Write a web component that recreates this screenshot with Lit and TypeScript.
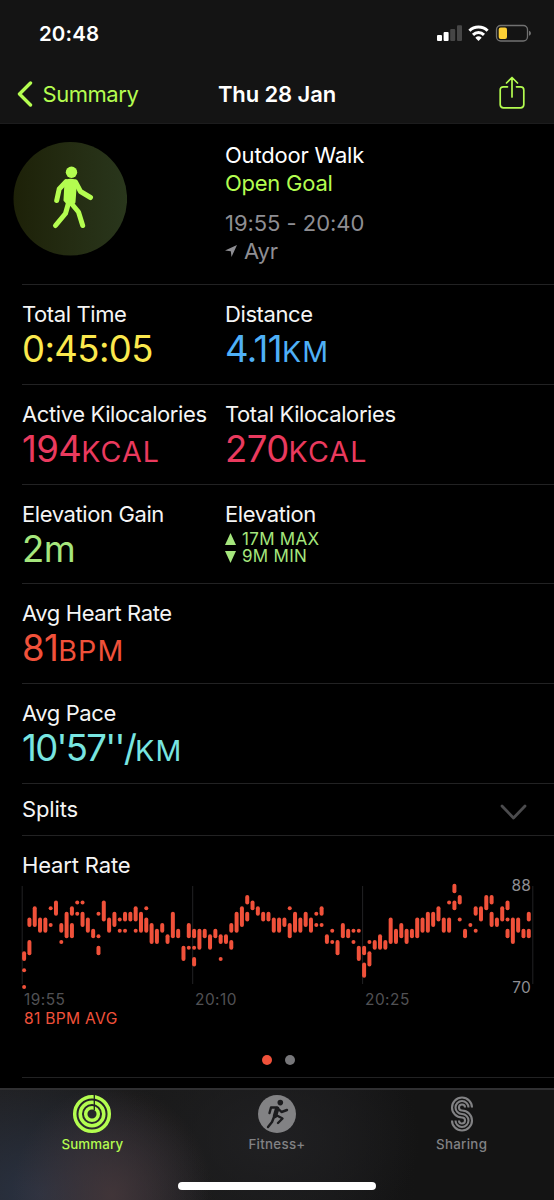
import { LitElement, html, svg, css } from "lit";
import { customElement, property } from "lit/decorators.js";
import { styleMap } from "lit/directives/style-map.js";

/** One entry per time slot; "high-low" is a range, a single number is one reading. */
const SAMPLES = `76-75 73 70|82-81 78-76|84-81|82-80|82-80|84 81|85-83|81-80 78|83-79|84-83 81-79|85 83|85 83-81|82-80|80-79|83 79 77-76|85-82
82-80|83-81|82 80|83-82 80|83-82|84-82 80|83-80|84 82-80|81-78|80-78|81-80|79-78|83-79|80-79|77-75|81-79 77
80-79 77 75-74|80-77|80-79|79-77|80-79|79-78 75|79-78|81-80 78-77|83-80|84-81|86-85 83-82|85-84|84-83|83-82|83-82|82-80
82-80|82-81|84 81-79|83-80|82-80|83-81|82-80|83 81|84-83 81|79-78|80 78|78-76|81-79|80-79|80 78|80 77-75
77-76 74-72|78 76-74|78-77|79-77|78-77|82-78|80-78|81-79|80-78|80-79|82-79|82-80|83-80|83-81|84-82|82-80
85 82-80|88-87 85-84|86-85 82|80-79|81|84-83 80|84-82|86-84|86-85 83-81|82-81|84-82|85-84 82 80-79|82-78|82-80|80-79|83-82 80-79`;

@customElement("heart-rate-chart")
export class HeartRateChart extends LitElement {
  static styles = css`
    :host { display: block; }
    svg { display: block; overflow: visible; }
    .grid { stroke: #222224; stroke-width: 1; }
    .range { stroke: #f0513a; stroke-width: 4; stroke-linecap: round; }
    .dot { fill: #f0513a; }
    .axis { fill: #8e8e93; font: 15.5px Inter, sans-serif; text-anchor: end; letter-spacing: 0.2px; }
    .time { fill: #515154; font: 15.4px Inter, sans-serif; letter-spacing: 0.5px; }
    .avg { fill: #f0513a; font: 15.6px Inter, sans-serif; letter-spacing: 0.3px; }
  `;

  render() {
    const y = (bpm: number) => 6.7 + (88 - bpm) * 5.63;
    const slots = SAMPLES.split(/[|\n]/);
    return html`<svg width="532" height="152" viewBox="0 0 532 152">
      ${[0.2, 170.7, 340.6, 510.8].map((x) => svg`<line class="grid" x1=${x} x2=${x} y1="7" y2="105"></line>`)}
      ${slots.map((slot, i) => {
        const x = 2.1 + i * 5.3125;
        return slot.split(" ").map((part) => {
          const [hi, lo] = part.split("-").map(Number);
          return lo
            ? svg`<line class="range" x1=${x} x2=${x} y1=${y(hi)} y2=${y(lo)}></line>`
            : svg`<circle class="dot" cx=${x} cy=${y(hi)} r="2"></circle>`;
        });
      })}
      <text class="axis" x="509" y="12">88</text>
      <text class="axis" x="509" y="114">70</text>
      <text class="time" x="2" y="126">19:55</text>
      <text class="time" x="173" y="126">20:10</text>
      <text class="time" x="343" y="126">20:25</text>
      <text class="avg" x="2" y="145">81 BPM AVG</text>
    </svg>`;
  }
}

@customElement("metric-cell")
export class MetricCell extends LitElement {
  @property() label = "";
  @property() value = "";
  @property() unit = "";
  @property() color = "#fff";
  @property({ type: Boolean }) tight = false;

  static styles = css`
    :host { display: block; }
    .label { font-size: 22px; line-height: 28px; letter-spacing: -0.4px; color: #f5f5f5; white-space: nowrap; }
    .value { display: flex; align-items: baseline; font-size: 36.5px; line-height: 43px; font-weight: 380; letter-spacing: -0.6px; white-space: nowrap; }
    :host([tight]) .value { letter-spacing: -1.7px; }
    .value .unit { font-size: 28.6px; font-weight: 430; letter-spacing: 1.1px; }
  `;

  render() {
    return html`<div class="label">${this.label}</div>
      <div class="value" style=${styleMap({ color: this.color })}>${this.value}<span class="unit">${this.unit}</span></div>`;
  }
}

@customElement("app-root")
export class AppRoot extends LitElement {
  static styles = css`
    :host { display: flex; flex-direction: column; width: 554px; height: 1200px; overflow: hidden; background: #000; color: #fff; font-family: Inter, sans-serif; }
    * { box-sizing: border-box; }
    svg { display: block; flex: none; }
    .top { height: 124px; flex: none; background: #141414; border-bottom: 1px solid #1c1c1d; }
    .status { height: 65px; display: flex; align-items: center; justify-content: space-between; padding: 1px 22px 0 39px; }
    .clock { font-size: 20.5px; font-weight: 600; letter-spacing: 0.1px; }
    .nav { height: 57px; display: grid; grid-template-columns: 1fr auto 1fr; align-items: center; padding: 0 17px; }
    .back { display: flex; align-items: center; gap: 9.5px; color: #b4fd50; font-size: 22px; letter-spacing: -0.45px; }
    .title { font-size: 22px; font-weight: 600; letter-spacing: -0.1px; }
    .share { justify-self: end; margin: 0 12px 2px 0; }
    .hero { height: 160px; flex: none; display: grid; grid-template-columns: 212px 1fr; padding: 18px 0 0 13px; }
    .info { font-size: 22px; line-height: 27.5px; letter-spacing: -0.2px; }
    .goal { color: #b4fd50; letter-spacing: -0.25px; }
    .when { margin-top: 13px; color: #8e8e93; letter-spacing: -0.05px; }
    .place { display: flex; align-items: center; gap: 7px; color: #8e8e93; }
    .row { margin-left: 22px; flex: none; border-top: 1px solid #222223; }
    .metrics { height: 99.8px; display: grid; grid-template-columns: 203px 1fr; padding-top: 15px; }
    .label { font-size: 22px; line-height: 28px; letter-spacing: -0.15px; color: #f5f5f5; }
    .narrow { letter-spacing: -0.38px; }
    .elev { display: flex; align-items: center; gap: 6px; font-size: 17px; line-height: 17.5px; color: #a5e67d; letter-spacing: 0.3px; }
    .up { margin-top: 3px; }
    .splits { height: 52px; display: flex; align-items: center; justify-content: space-between; padding-right: 27px; }
    .chevron { margin-top: 3px; }
    .heart { height: 242px; padding-top: 15px; }
    .pages { display: flex; gap: 13.5px; padding: 24px 0 0 239.5px; }
    .page { width: 10px; height: 10px; border-radius: 50%; background: #77777a; }
    .current { background: #f0513a; }
    .end { flex: 1; }
    .tabs { position: relative; height: 112px; flex: none; border-top: 2px solid #303032;
      background:
        radial-gradient(ellipse 100px 110px at 112px 105px, #48383acc, #48383a00),
        radial-gradient(ellipse 170px 120px at 40px 105px, #2a3242, #2a324200),
        radial-gradient(ellipse 150px 110px at 270px 50px, #202022, #20202200),
        linear-gradient(90deg, #202022, #191919 30%, #171718 60%, #141414 75%); }
    .items { display: grid; grid-template-columns: repeat(3, 184.67px); padding-top: 4px; }
    .tab { display: flex; flex-direction: column; align-items: center; gap: 1px; color: #828284; font-size: 13.3px; font-weight: 500; line-height: 18px; letter-spacing: 0.3px; }
    .active { color: #b4fd50; letter-spacing: 0.15px; }
    .home { width: 198px; height: 8px; border-radius: 4px; background: #fff; margin: 29px 0 0 178px; }
  `;

  private metrics = [
    [["Total Time", "0:45:05", "", "#fbe84d"], ["Distance", "4.11", "KM", "#4fb0f7"]],
    [["Active Kilocalories", "194", "KCAL", "#ea3a5e"], ["Total Kilocalories", "270", "KCAL", "#ea3a5e"]],
  ];

  private cell([label, value, unit, color]: string[], tight = false) {
    return html`<metric-cell label=${label} value=${value} unit=${unit} color=${color} ?tight=${tight}></metric-cell>`;
  }

  private statusIcons() {
    return html`<svg width="96" height="20" viewBox="436 23 96 20">
      <rect x="437" y="35" width="5" height="6" rx="1" fill="#fff"></rect>
      <rect x="443.6" y="32" width="5" height="9" rx="1" fill="#fff"></rect>
      <rect x="450.2" y="29" width="5" height="12" rx="1" fill="#464646"></rect>
      <rect x="457" y="25.3" width="5" height="15.7" rx="1" fill="#464646"></rect>
      <g fill="none" stroke="#fff" stroke-width="3">
        <path d="M469.4 30.8a13 13 0 0 1 18.2 0"></path>
        <path d="M473 34.8a8 8 0 0 1 11 0"></path>
      </g>
      <path d="M475.3 37.8a4.7 4.7 0 0 1 6.4 0L478.5 41z" fill="#fff"></path>
      <rect x="496.5" y="25.5" width="31" height="15.5" rx="4.2" fill="none" stroke="#717171" stroke-width="1.3"></rect>
      <rect x="498.7" y="27.5" width="8.3" height="11.5" rx="2" fill="#fdd035"></rect>
      <path d="M529 30.8c2.6.8 2.6 4.2 0 5z" fill="#717171"></path>
    </svg>`;
  }

  private walker() {
    return html`<svg width="114" height="114" viewBox="13 142 114 114">
      <defs><linearGradient id="disc"><stop stop-color="#1d2108"></stop><stop offset=".5" stop-color="#242c12"></stop><stop offset="1" stop-color="#29361c"></stop></linearGradient></defs>
      <circle cx="70.3" cy="198.8" r="56.8" fill="url(#disc)"></circle>
      <g fill="none" stroke="#b4fd50" stroke-linecap="round" stroke-linejoin="round">
        <circle cx="71.5" cy="172.2" r="5.7" fill="#b4fd50" stroke="none"></circle>
        <path d="M66.500 181.500Q70.500 180 75 181.500L73.500 202L69 204L65.500 200Z" fill="#b4fd50" stroke-width="4"></path>
        <path d="M66 181.700L59.200 189L56.700 200.500" stroke-width="5"></path>
        <path d="M75.500 182L80.500 191.500L90.500 197.500" stroke-width="5"></path>
        <path d="M68.500 203L65.500 213.500L55.500 225.500" stroke-width="5"></path>
        <path d="M71 203L78.500 212L82.700 225.500" stroke-width="5"></path>
      </g>
    </svg>`;
  }

  render() {
    return html`
      <header class="top">
        <div class="status"><span class="clock">20:48</span>${this.statusIcons()}</div>
        <nav class="nav">
          <div class="back">
            <svg width="16" height="26" viewBox="0 0 16 26"><path d="M13.500 2L2.500 13L13.500 24" fill="none" stroke="#b4fd50" stroke-width="3.400" stroke-linecap="round" stroke-linejoin="round"></path></svg>
            <span>Summary</span>
          </div>
          <div class="title">Thu 28 Jan</div>
          <svg class="share" width="26" height="34" viewBox="0 0 26 34"><path d="M8.500 10.800H4.500Q1.200 10.800 1.200 14V28.500Q1.200 31.800 4.500 31.800H21.500Q24.800 31.800 24.800 28.500V14Q24.800 10.800 21.500 10.800H17.500M13 21V2M7.500 7L13 1.500L18.500 7" fill="none" stroke="#b4fd50" stroke-width="1.700" stroke-linecap="round" stroke-linejoin="round"></path></svg>
        </nav>
      </header>
      <section class="hero">
        ${this.walker()}
        <div class="info">
          <div>Outdoor Walk</div>
          <div class="goal">Open Goal</div>
          <div class="when">19:55 - 20:40</div>
          <div class="place"><svg width="12" height="12" viewBox="0 0 12 12"><path d="M0 5.500L12 0L6.500 12L5.800 6.200Z" fill="#8e8e93"></path></svg>Ayr</div>
        </div>
      </section>
      ${this.metrics.map((pair) => html`<section class="row metrics">${pair.map((m) => this.cell(m))}</section>`)}
      <section class="row metrics">
        ${this.cell(["Elevation Gain", "2m", "", "#a5e67d"])}
        <div>
          <div class="label narrow">Elevation</div>
          <div class="elev up"><svg width="11" height="12" viewBox="0 0 11 12"><path d="M5.500 0L11 12H0Z" fill="#a5e67d"></path></svg>17M MAX</div>
          <div class="elev"><svg width="11" height="12" viewBox="0 0 11 12"><path d="M5.500 12L11 0H0Z" fill="#a5e67d"></path></svg>9M MIN</div>
        </div>
      </section>
      <section class="row metrics">${this.cell(["Avg Heart Rate", "81", "BPM", "#f0513a"])}</section>
      <section class="row metrics">${this.cell(["Avg Pace", "10'57''/", "KM", "#78e5e0"], true)}</section>
      <section class="row splits">
        <span class="label">Splits</span>
        <svg class="chevron" width="27" height="18" viewBox="0 0 27 18"><path d="M2 4L13.500 16L25 4" fill="none" stroke="#4b4b4d" stroke-width="2.800" stroke-linecap="round" stroke-linejoin="round"></path></svg>
      </section>
      <section class="row heart">
        <div class="label">Heart Rate</div>
        <heart-rate-chart></heart-rate-chart>
        <div class="pages"><i class="page current"></i><i class="page"></i></div>
      </section>
      <div class="row end"></div>
      <footer class="tabs">
        <div class="items">
          <div class="tab active">
            <svg width="40" height="40" viewBox="-20 -20 40 40"><g fill="none" stroke="#b4fd50" stroke-width="3.500"><circle r="17.300"></circle><circle r="11.800"></circle><circle r="6.300"></circle></g><path d="M2.300 -20V-4" stroke="#202021" stroke-width="1.300"></path></svg>
            Summary
          </div>
          <div class="tab">
            <svg width="40" height="40" viewBox="-20 -20 40 40"><circle r="19" fill="#828284"></circle><g fill="none" stroke="#1c1c1e" stroke-width="2.400" stroke-linecap="round" stroke-linejoin="round"><circle cx="3.300" cy="-11.400" r="2.800" fill="#1c1c1e" stroke="none"></circle><path d="M-7.500 -1L-6 -6.500H0L4.500 -2L10 -4M1 -6L-1 1L5.500 4.500L1 9M-3 3L-5 8L-9 13"></path><path d="M0 -5L-2 2" stroke-width="4.500"></path></g></svg>
            Fitness+
          </div>
          <div class="tab">
            <svg width="40" height="40" viewBox="-20 -20 40 40"><g fill="none" stroke="#828284" stroke-width="2.100" stroke-linecap="butt">${[[3, 10], [6.5, 6.5], [10, 3]].map(([a, b]) => svg`<path d=${`M${a} -6.500A${a} ${a} 0 1 0 0 ${a - 6.5}A${b} ${b} 0 1 1 ${-b} 6.500`}></path>`)}</g></svg>
            Sharing
          </div>
        </div>
        <div class="home"></div>
      </footer>`;
  }
}
